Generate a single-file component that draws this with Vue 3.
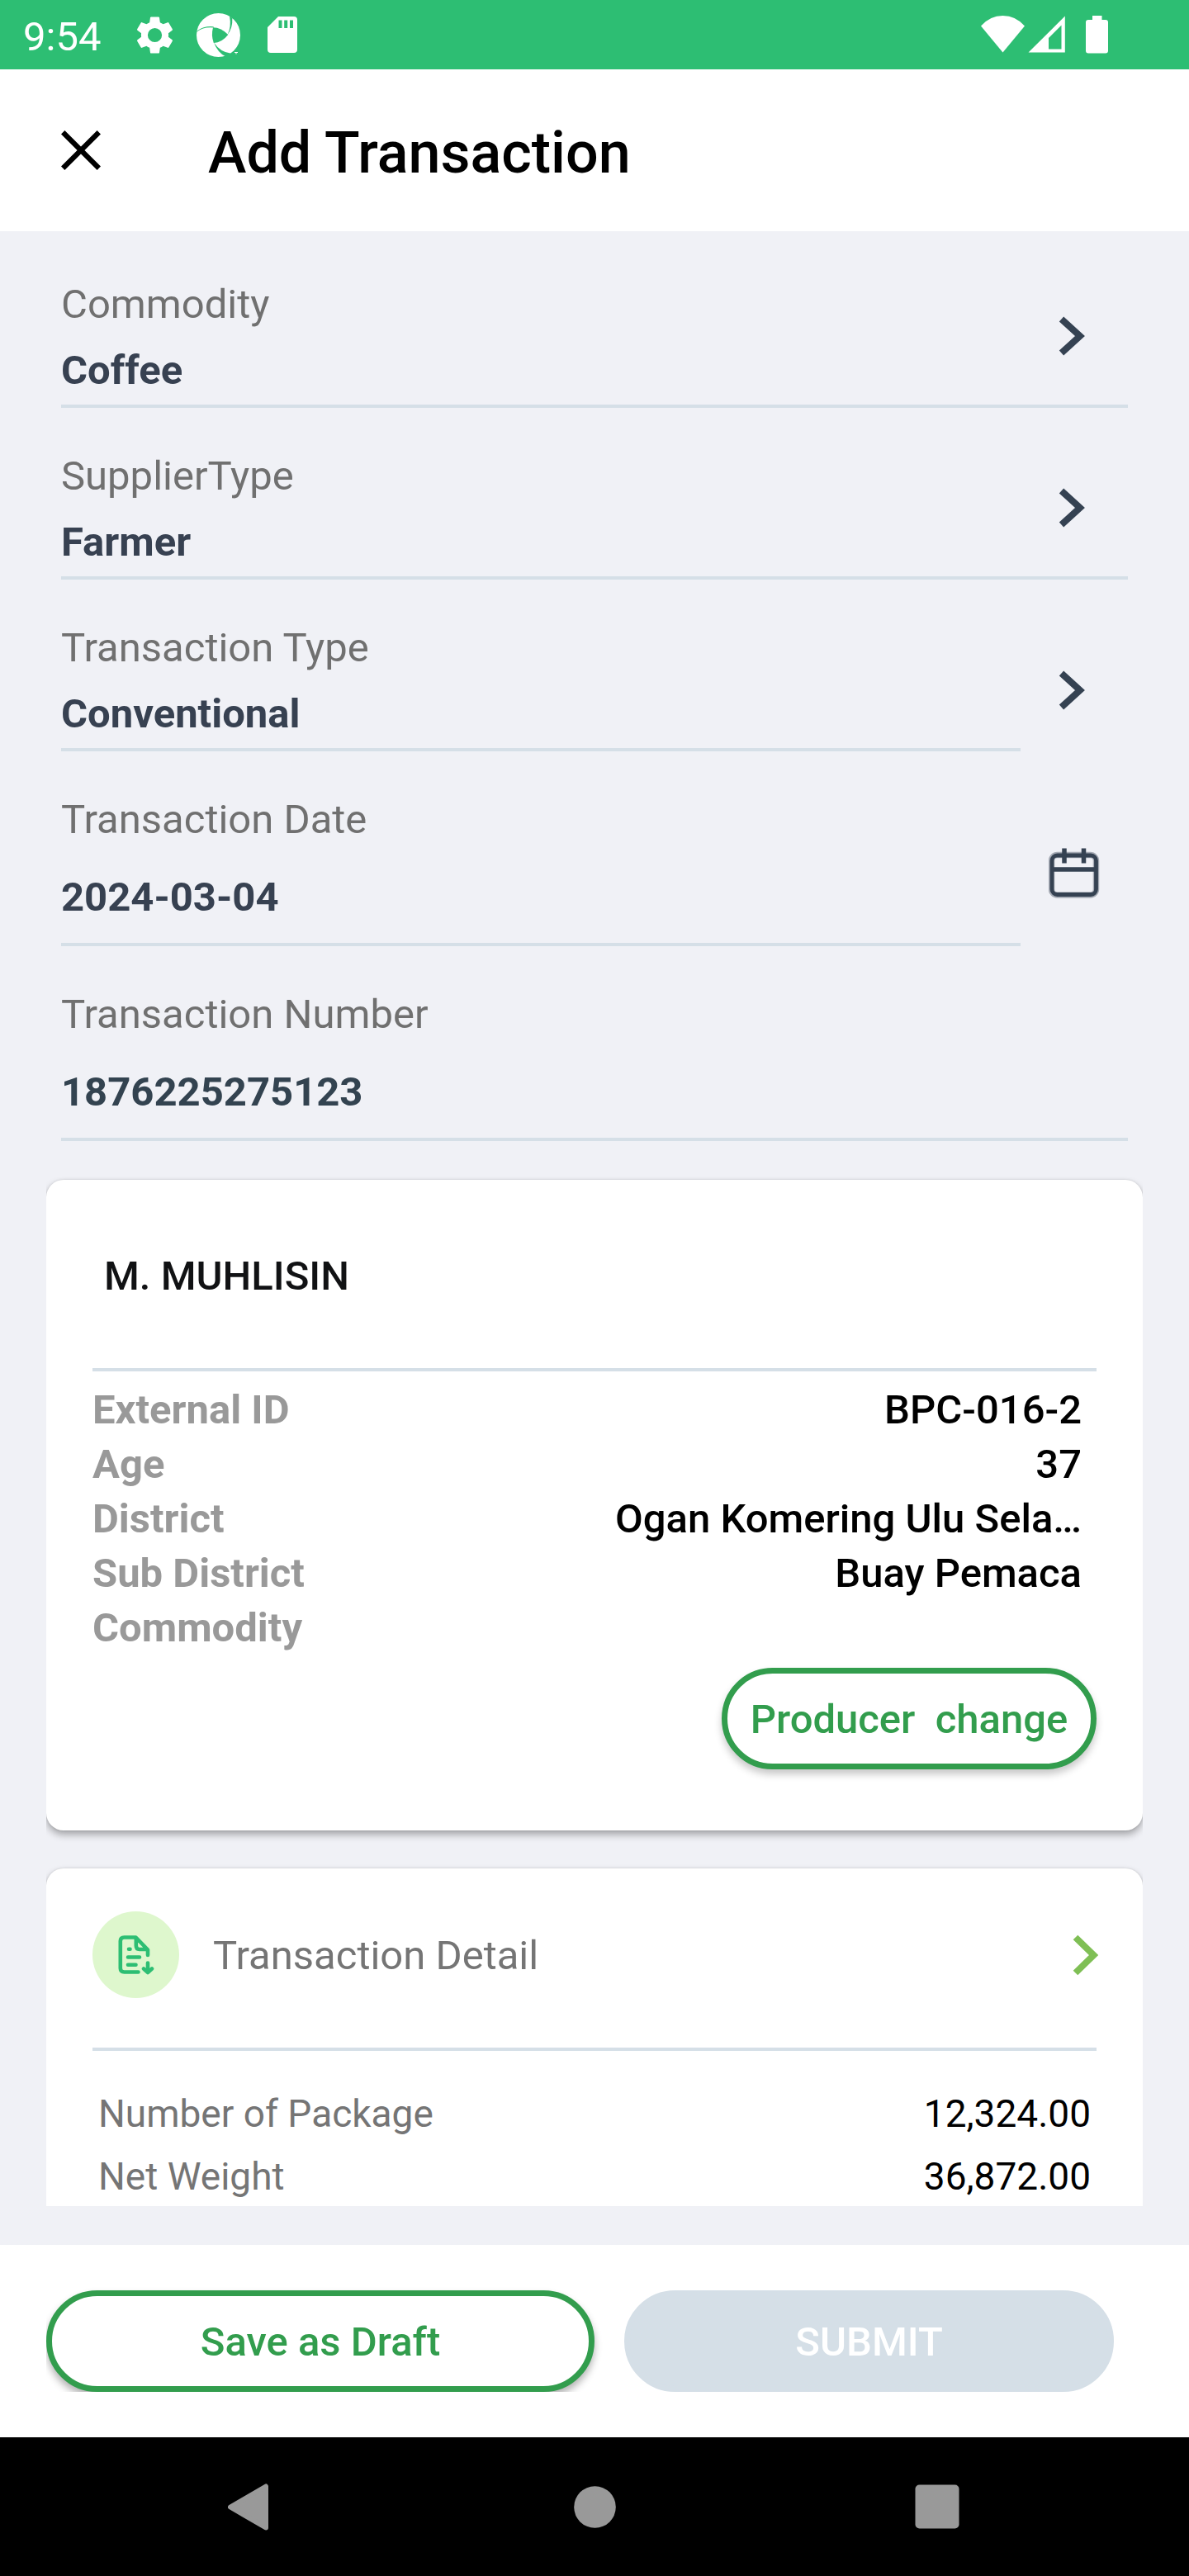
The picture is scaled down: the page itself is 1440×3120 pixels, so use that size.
<script setup>
const fields = [
  { label: 'Commodity', value: 'Coffee', icon: 'chevron', kind: 'full' },
  { label: 'SupplierType', value: 'Farmer', icon: 'chevron', kind: 'full' },
  { label: 'Transaction Type', value: 'Conventional', icon: 'chevron', kind: 'short' },
  { label: 'Transaction Date', value: '2024-03-04', icon: 'calendar', kind: 'short tall' },
  { label: 'Transaction Number', value: '1876225275123', icon: '', kind: 'full tall slate' },
]
const producer = [
  ['External ID', 'BPC-016-2'],
  ['Age', '37'],
  ['District', 'Ogan Komering Ulu Sela…'],
  ['Sub District', 'Buay Pemaca'],
  ['Commodity', ''],
]
const details = [
  ['Number of Package', '12,324.00'],
  ['Net Weight', '36,872.00'],
]
</script>

<template>
  <div class="screen">
    <div class="status">
      <span class="time">9:54</span>
      <svg class="gear" width="53" height="53" viewBox="0 0 24 24" fill="#fff"><path d="M19.43 12.98c.04-.32.07-.64.07-.98s-.03-.66-.07-.98l2.11-1.65c.19-.15.24-.42.12-.64l-2-3.46c-.12-.22-.39-.3-.61-.22l-2.49 1c-.52-.4-1.08-.73-1.69-.98l-.38-2.65C14.46 2.18 14.25 2 14 2h-4c-.25 0-.46.18-.49.42l-.38 2.65c-.61.25-1.17.59-1.69.98l-2.49-1c-.23-.09-.49 0-.61.22l-2 3.46c-.13.22-.07.49.12.64l2.11 1.65c-.04.32-.07.65-.07.98s.03.66.07.98l-2.11 1.65c-.19.15-.24.42-.12.64l2 3.46c.12.22.39.3.61.22l2.49-1c.52.4 1.08.73 1.69.98l.38 2.65c.03.24.24.42.49.42h4c.25 0 .46-.18.49-.42l.38-2.65c.61-.25 1.17-.59 1.69-.98l2.49 1c.23.09.49 0 .61-.22l2-3.46c.12-.22.07-.49-.12-.64l-2.11-1.65zM12 15.9a3.9 3.9 0 1 1 0-7.8 3.9 3.9 0 0 1 0 7.8z"/></svg>
      <svg class="shutter" width="54" height="54" viewBox="0 0 54 54">
        <circle cx="26.5" cy="26.5" r="26.500" fill="#fff"/>
        <g fill="#2dbe73">
          <path d="M20 17.300Q30 17.500 38.300 26Q31 35.500 20.800 36Q17.500 27 20 17.300Z"/>
          <path d="M-.5 23Q9 16 21 17.600L20.500 16.300Q10 15 .5 21.500Z"/>
          <path d="M37.500 26Q42.500 17 40 3L43.300 6Q44 18 37.500 26Z"/>
          <path d="M21 35.500Q29 47.500 42 48.700L35.500 52.500Q26 48.500 21 35.500Z"/>
        </g>
        <path d="M46 47.500h4M48 47.500v2" stroke="#fff" stroke-width="1"/>
      </svg>
      <svg class="sd" width="36" height="44" viewBox="0 0 36 44"><path fill="#fff" fill-rule="evenodd" d="M13 0H32a4 4 0 0 1 4 4V40a4 4 0 0 1-4 4H4a4 4 0 0 1-4-4V13ZM13.500 4.500V14h4V4.500ZM20.200 4.500V14h4V4.500ZM27 4.500V14h4V4.500Z"/></svg>
      <svg class="signals" width="156" height="46" viewBox="0 0 156 46" fill="#fff">
        <path d="M0 12.500Q11 0 26.500 0T53 12.500L26.500 44.500Z"/>
        <path fill-rule="evenodd" d="M57.500 44.500L101.800 .5V44.500ZM82 40.500H97.500V11.500L82 27Z"/>
        <path d="M135 0h11.500V5H151a3 3 0 0 1 3 3V42.500a3 3 0 0 1-3 3H130a3 3 0 0 1-3-3V8a3 3 0 0 1 3-3h5Z"/>
      </svg>
    </div>

    <header class="bar">
      <svg width="48" height="48" viewBox="0 0 48 48"><path d="M2.200 2.200L45.800 45.800M45.800 2.200L2.200 45.800" stroke="#000" stroke-width="6.200"/></svg>
      <h1>Add Transaction</h1>
    </header>

    <main class="scroll">
      <div class="form">
        <div v-for="f in fields" :key="f.label" class="field" :class="f.kind">
          <div class="text">
            <div class="label">{{ f.label }}</div>
            <div class="value">{{ f.value }}</div>
          </div>
          <svg v-if="f.icon === 'chevron'" class="chev" width="32" height="48" viewBox="0 0 32 48"><path d="M3.500 3.500L26 24L3.500 44.500" fill="none" stroke="#354252" stroke-width="8"/></svg>
          <svg v-if="f.icon === 'calendar'" class="cal" width="62" height="62" viewBox="0 0 62 62" fill="none" stroke="#354252">
            <rect x="3.500" y="9.500" width="54" height="48.500" rx="7" stroke-width="7.500" stroke-opacity=".4"/>
            <rect x="4" y="10" width="53.500" height="47.500" rx="6.500" stroke-width="4.800"/>
            <path d="M5 27H57" stroke-width="5.500"/>
            <path d="M19 1.500V19.500M42.500 1.500V19.500" stroke-width="5.500"/>
          </svg>
        </div>
      </div>

      <section class="card producer">
        <h2>M. MUHLISIN</h2>
        <div v-for="r in producer" :key="r[0]" class="prow"><span>{{ r[0] }}</span><b>{{ r[1] }}</b></div>
        <button class="pill change">Producer&nbsp; change</button>
      </section>

      <section class="card detail">
        <div class="dhead">
          <span class="badge">
            <svg width="44" height="48" viewBox="0 0 44 48" fill="none" stroke="#2dbe73" stroke-width="4.600" stroke-linecap="round" stroke-linejoin="round"><path d="M24.500 44.500H7.500Q2.800 44.500 2.800 40V7Q2.800 2.500 7.500 2.500H21.500L36 17.500V24M21.800 3.500V12.500Q21.800 17 26 17H35M13 16.800H14.500M12 26.500H26M12 35.700H21.500M36 33.500V45M31 40.500L36 45L41 40.500"/></svg>
          </span>
          <span class="dtitle">Transaction Detail</span>
          <svg width="31" height="50" viewBox="0 0 31 50"><path d="M3.500 3.500L25.500 25L3.500 46.500" fill="none" stroke="#7fbf55" stroke-width="8"/></svg>
        </div>
        <div v-for="r in details" :key="r[0]" class="drow"><span>{{ r[0] }}</span><span class="num">{{ r[1] }}</span></div>
      </section>
    </main>

    <footer class="actions">
      <div class="clip"><button class="pill save">Save as Draft</button></div>
      <button class="pill submit">SUBMIT</button>
    </footer>

    <nav class="nav">
      <svg width="50" height="57" viewBox="0 0 50 57"><path d="M46 3.500V53.500L3 28.500Z" fill="#999" stroke="#999" stroke-width="6" stroke-linejoin="round"/></svg>
      <svg class="home" width="51" height="51" viewBox="0 0 51 51"><circle cx="25.500" cy="25.500" r="25.300" fill="#999"/></svg>
      <svg width="54" height="54" viewBox="0 0 54 54"><rect x=".5" y=".5" width="53" height="53" rx="5" fill="#999"/></svg>
    </nav>
  </div>
</template>

<style>
body { margin: 0; }
</style>

<style scoped>
.screen {
  width: 1440px;
  height: 3120px;
  display: flex;
  flex-direction: column;
  background: #f0f1f6;
  font-family: Roboto, sans-serif;
  font-size: 49px;
  line-height: 66px;
  overflow: hidden;
}
.screen * { box-sizing: border-box; }
svg { display: block; flex: none; }
h1, h2 { margin: 0; font-weight: 500; }

.status { height: 84px; background: #2dbe73; color: #fff; display: flex; align-items: flex-start; flex: none; }
.time { width: 133px; padding-left: 28px; margin-top: 12px; flex: none; }
.gear { margin: 16px 0 0 28px; }
.shutter { margin: 16px 0 0 24px; }
.sd { margin: 20px 0 0 32px; }
.signals { margin: 19px 96px 0 auto; }

.bar { height: 196px; background: #fff; display: flex; align-items: flex-start; padding: 74px 0 0 74px; flex: none; }
.bar h1 { margin: -23px 0 0 130px; font-size: 70px; line-height: 100px; color: #000; }

.scroll { height: 2392px; overflow: hidden; padding: 6px 56px 0; flex: none; margin-bottom: 47px; }
.form { padding: 0 18px; }
.field { height: 208px; display: flex; }
.tall { height: 236px; }
.text { width: 1162px; padding-top: 50px; }
.full { border-bottom: 4px solid #d5dfe7; }
.short .text { border-bottom: 4px solid #d5dfe7; }
.label { color: #707070; }
.value { margin-top: 14px; font-weight: 700; color: #374151; }
.tall .value { margin-top: 28px; }
.slate .value { color: #334350; }
.chev { margin: 97px 0 0 46px; }
.short .chev { margin-top: 110px; }
.cal { margin: 116px 0 0 34px; }

.card {
  width: 1328px;
  background: #fff;
  border-radius: 21px;
  padding: 0 56px;
  box-shadow: 0 5px 10px rgba(0, 0, 0, 0.32), 0 0 3px rgba(0, 0, 0, 0.12);
  clip-path: inset(-10px 0 -30px 0);
}
.producer { margin-top: 47px; height: 788px; display: flex; flex-direction: column; }
.producer h2 { height: 232px; font-size: 49px; padding: 84px 0 0 14px; color: #111214; border-bottom: 4px solid #d5dfe7; margin-bottom: 14px; }
.prow { height: 66px; display: flex; justify-content: space-between; padding-right: 18px; }
.prow span { font-weight: 700; color: #999; }
.prow b { font-weight: 500; color: #000; }
.pill {
  font: 500 49px/66px Roboto, sans-serif;
  height: 123px;
  border-radius: 62px;
  border: 7px solid #329d4d;
  background: #fff;
  color: #329d4d;
  padding: 2px 0 0;
  display: block;
  white-space: nowrap;
}
.change { width: 454px; align-self: flex-end; margin-top: 15px; box-shadow: 0 6px 10px rgba(0, 0, 0, 0.22); }

.detail { margin-top: 46px; height: 500px; }
.dhead { height: 221px; border-bottom: 4px solid #d5dfe7; display: flex; align-items: center; padding-bottom: 8px; margin-bottom: 43px; }
.badge { width: 105px; height: 105px; border-radius: 50%; background: #def7cd; display: flex; align-items: center; justify-content: center; }
.dtitle { margin: 2px 0 0 41px; color: #757575; flex: 1; }
.dhead > svg { margin-right: -2px; }
.drow { height: 76px; display: flex; justify-content: space-between; padding: 0 7px; font-size: 46px; color: #757575; }
.num { color: #000; }

.actions { height: 233px; background: #fff; padding: 55px 0 0 56px; display: flex; flex: none; }
.clip { width: 664px; height: 123px; clip-path: inset(-10px -10px 0 0); }
.save { width: 664px; box-shadow: 0 6px 10px rgba(0, 0, 0, 0.3); }
.submit { width: 593px; margin-left: 36px; background: #d5dfe7; border-color: #d5dfe7; color: #fff; }

.nav { height: 168px; background: #000; display: flex; align-items: center; flex: none; justify-content: space-between; padding: 0 278px 0 276px; }
.home { margin-left: 6px; }
</style>
